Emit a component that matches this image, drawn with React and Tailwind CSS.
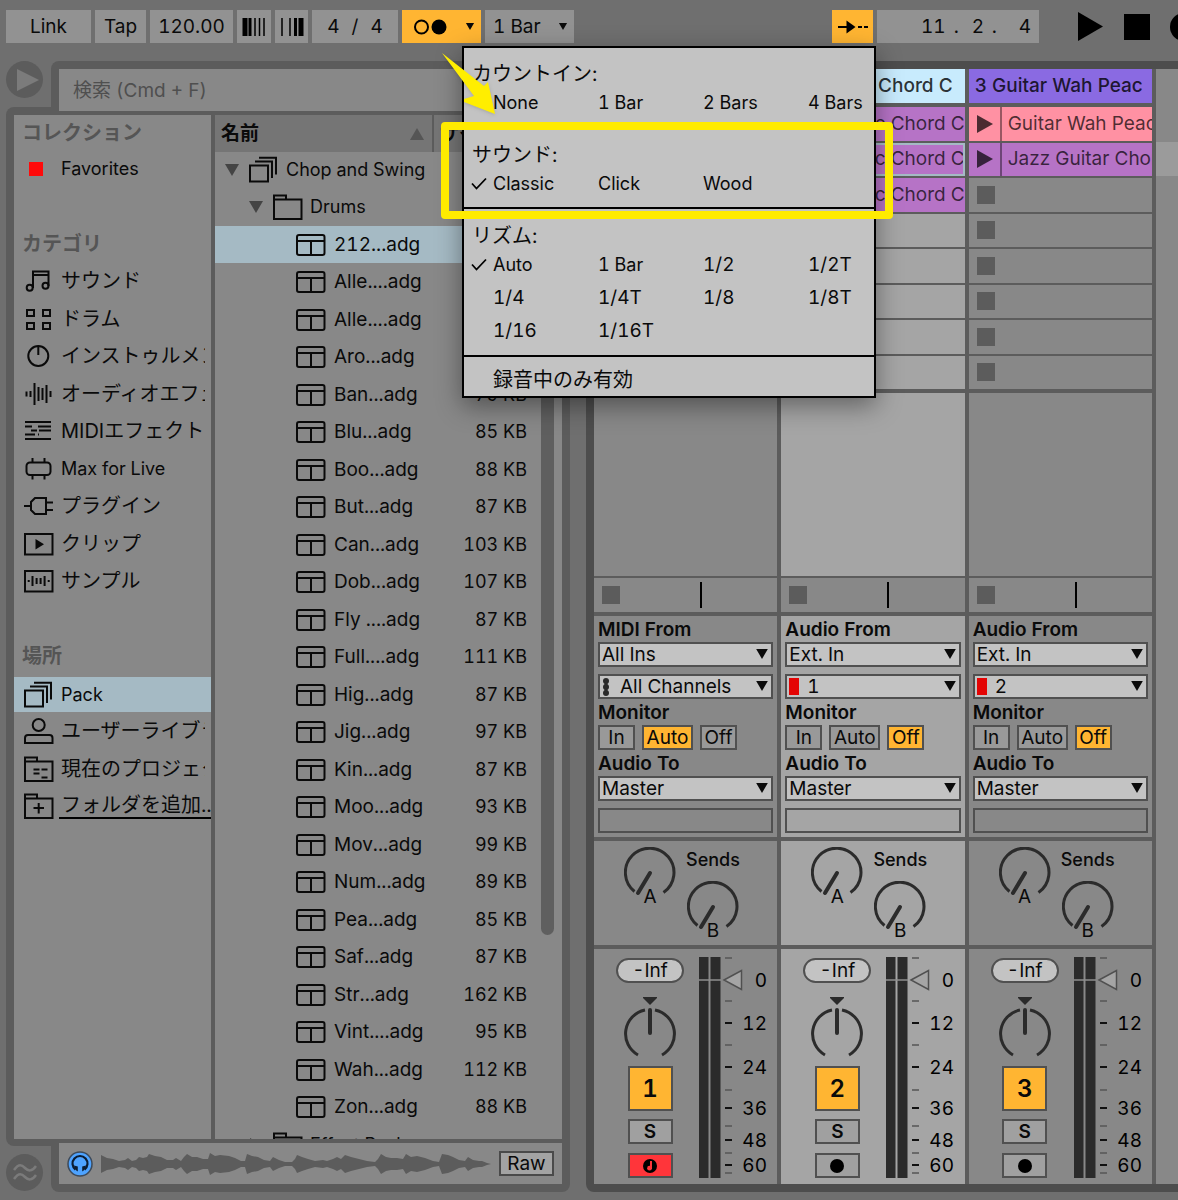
import React from "react";

/* ---------- icons ---------- */

const Icon = ({ children, className = "" }) => (
  <svg
    viewBox="0 0 30 28"
    className={"h-7 w-[30px] shrink-0 overflow-visible " + className}
    fill="none"
    stroke="#0a0a0a"
    strokeWidth="2"
    aria-hidden="true"
  >
    {children}
  </svg>
);

const Bars = ({ data }) => (
  <path d={data.map(([x, h]) => `M${x} ${14 - h}V${14 + h}`).join("")} />
);

const icons = {
  sounds: (
    <Icon>
      <path d="M9 21V4.500H24.500V19M9 8H24.500" />
      <circle cx="5.700" cy="20.700" r="3" />
      <circle cx="21.500" cy="18.700" r="3" />
    </Icon>
  ),
  drums: (
    <Icon>
      <path d="M3 5h7v6H3zM19 5h7v6h-7zM3 18h7v6H3zM19 18h7v6h-7z" />
    </Icon>
  ),
  instruments: (
    <Icon>
      <circle cx="14.300" cy="14" r="10" />
      <path d="M14.300 4V13" />
    </Icon>
  ),
  audioFx: (
    <Icon>
      <Bars data={[[2.500, 2.500], [6.500, 3], [10.500, 11], [14.500, 7], [18.500, 6], [22.500, 9], [26.500, 3]]} />
    </Icon>
  ),
  midiFx: (
    <Icon>
      <path d="M1 5H27M1 9.500H8M14 9.500H27M7 13.500H13M15 13.500H27M1 17.500H11M14 17.500H15M1 22H27" />
    </Icon>
  ),
  max: (
    <Icon>
      <rect x="2.500" y="7.500" width="24" height="12.500" rx="3.500" />
      <path d="M8.500 3V7.500M20.500 3V7.500M8.500 20V24.500M20.500 20V24.500" />
    </Icon>
  ),
  plugin: (
    <Icon>
      <path d="M0 14H7M22 6V22H11L7 18V10L11 6ZM22 10.500H29M22 18H29" />
    </Icon>
  ),
  clip: (
    <Icon>
      <rect x="1" y="4" width="27.500" height="20.500" />
      <path d="M11.500 9V19.500L20 14.200Z" fill="#0a0a0a" stroke="none" />
    </Icon>
  ),
  sample: (
    <Icon>
      <rect x="1" y="4" width="27.500" height="20.500" />
      <Bars data={[[4.700, 1], [8.500, 5], [12.600, 3], [16.600, 3], [20.600, 5], [24.700, 1]]} />
    </Icon>
  ),
  pack: (
    <Icon>
      <path d="M1 9.500H19V25.500H1ZM6 5.500H23V22M10 1.700H27V18.500" />
    </Icon>
  ),
  user: (
    <Icon>
      <circle cx="14.700" cy="8" r="6" />
      <path d="M1 26V21Q1 18 4 18H25.500Q28.500 18 28.500 21V26Z" />
    </Icon>
  ),
  project: (
    <Icon>
      <path d="M1 26V2.500H13V6.500H28.500V26ZM1 6.500H13M9.500 14.500H15.500M17.500 14.500H23.500M9.500 18.500H15.500M17.500 22.500H23.500" />
    </Icon>
  ),
  addFolder: (
    <Icon>
      <path d="M1 26V2.500H13V6.500H28.500V26ZM1 6.500H13M9.500 16H20M14.700 11V21.500" />
    </Icon>
  ),
  folder: (
    <Icon>
      <path d="M1 26V2.500H13V6.500H28.500V26ZM1 6.500H13" />
    </Icon>
  ),
  rack: (
    <Icon>
      <rect x="1" y="4" width="27.500" height="20" rx="2" />
      <path d="M1 10H28.500M15 10V24" />
    </Icon>
  ),
};

const Triangle = ({ className }) => (
  <svg viewBox="0 0 14 12" className={className} aria-hidden="true">
    <path d="M0 0H14L7 12Z" fill="currentColor" />
  </svg>
);

/* ---------- transport ---------- */

const tool = "flex h-[33px] shrink-0 items-center justify-center bg-[#929292]";

function Transport() {
  return (
    <header className="flex h-[61px] shrink-0 items-start gap-1 pl-1.5 pt-2.5">
      <button className={tool + " w-[85px]"}>Link</button>
      <button className={tool + " w-[51px]"}>Tap</button>
      <button className={tool + " w-[83px]"}>120.00</button>
      <button className={tool + " w-[34px]"} aria-label="Nudge down">
        <svg viewBox="0 0 24 18" className="h-[18px] w-6" stroke="#000">
          <path d="M3 0V18" strokeWidth="5" />
          <path d="M8 0V18" strokeWidth="3" />
          <path d="M13 0V18M17.500 0V18M22 0V18" strokeWidth="1.500" />
        </svg>
      </button>
      <button className={tool + " w-[33px]"} aria-label="Nudge up">
        <svg viewBox="0 0 24 18" className="h-[18px] w-6" stroke="#000">
          <path d="M21 0V18" strokeWidth="5" />
          <path d="M15.500 0V18" strokeWidth="3" />
          <path d="M2 0V18M10 0V18" strokeWidth="1.500" />
        </svg>
      </button>
      <button className={tool + " w-[86px] gap-3"}>
        <span>4</span>
        <span>/</span>
        <span>4</span>
      </button>
      <button className="flex h-[33px] w-[79px] shrink-0 items-center bg-[#ffb532] pl-3" aria-label="Metronome">
        <svg viewBox="0 0 34 16" className="h-4 w-[34px]">
          <circle cx="7.500" cy="8" r="6.500" fill="none" stroke="#000" strokeWidth="2" />
          <circle cx="25" cy="8" r="7.500" />
        </svg>
        <Triangle className="ml-auto mr-1.5 h-[7px] w-2.5" />
      </button>
      <button className="flex h-[33px] w-[89px] shrink-0 items-center bg-[#929292] pl-2">
        1 Bar
        <Triangle className="ml-auto mr-1.5 h-[7px] w-2.5" />
      </button>

      <div className="ml-auto flex items-center">
        <button className="flex h-[33px] w-[41px] items-center justify-center bg-[#ffb532]" aria-label="Follow">
          <svg viewBox="0 0 30 16" className="h-4 w-[30px]" stroke="#000" strokeWidth="2">
            <path d="M0 8H9M20 8H24M26 8H30" />
            <path d="M8.500 1.500L17.500 8L8.500 14.500Z" fill="#000" stroke="none" />
          </svg>
        </button>
        <div className="ml-1 flex h-[33px] w-[162px] items-center justify-end bg-[#929292] pr-2">
          <span>11</span>
          <span className="w-[26px] pl-2">.</span>
          <span className="w-3 text-right">2</span>
          <span className="w-[35px] pl-2">.</span>
          <span>4</span>
        </div>
        <button className="ml-[39px]" aria-label="Play">
          <svg viewBox="0 0 25 29" className="h-[29px] w-[25px]">
            <path d="M0 0L25 14.500L0 29Z" />
          </svg>
        </button>
        <button className="ml-[21px] size-[26px] bg-black" aria-label="Stop" />
        <button className="ml-5 w-2 overflow-hidden" aria-label="Record">
          <span className="block size-7 rounded-full bg-black" />
        </button>
      </div>
    </header>
  );
}

/* ---------- browser ---------- */

const sidebar = [
  { head: "コレクション" },
  { label: "Favorites", swatch: true, latin: true },
  {},
  { head: "カテゴリ" },
  { label: "サウンド", icon: icons.sounds },
  { label: "ドラム", icon: icons.drums },
  { label: "インストゥルメント", icon: icons.instruments },
  { label: "オーディオエフェクト", icon: icons.audioFx },
  { label: "MIDIエフェクト", icon: icons.midiFx },
  { label: "Max for Live", icon: icons.max, latin: true },
  { label: "プラグイン", icon: icons.plugin },
  { label: "クリップ", icon: icons.clip },
  { label: "サンプル", icon: icons.sample },
  {},
  { head: "場所" },
  { label: "Pack", icon: icons.pack, selected: true, latin: true },
  { label: "ユーザーライブラリ", icon: icons.user },
  { label: "現在のプロジェクト", icon: icons.project },
  { label: "フォルダを追加...", icon: icons.addFolder, link: true },
];

function SidebarRow({ row }) {
  if (row.head)
    return <h2 className="flex h-full items-center pl-2 text-xl font-bold leading-6 text-[#555]">{row.head}</h2>;
  if (!row.label) return null;
  return (
    <button
      className={
        "flex h-full w-full items-center gap-[7px] overflow-hidden pl-2.5 text-left " +
        (row.latin ? "text-lg leading-6 " : "text-xl leading-6 ") +
        (row.selected ? "border-t-2 border-[#888] bg-[#a5bac4]" : "")
      }
    >
      {row.swatch ? (
        <span className="flex w-[30px] shrink-0 pl-[5px]">
          <span className="size-3.5 bg-[#ff0a0a]" />
        </span>
      ) : (
        row.icon
      )}
      {row.link ? (
        <span className="-ml-0.5 flex-1 overflow-hidden whitespace-nowrap border-b-2 border-black pl-0.5">
          {row.label}
        </span>
      ) : (
        <span className="mr-1.5 flex-1 overflow-hidden whitespace-nowrap">{row.label}</span>
      )}
    </button>
  );
}

const files = [
  ["212...adg", ""],
  ["Alle....adg", ""],
  ["Alle....adg", ""],
  ["Aro...adg", ""],
  ["Ban...adg", "79 KB"],
  ["Blu...adg", "85 KB"],
  ["Boo...adg", "88 KB"],
  ["But...adg", "87 KB"],
  ["Can...adg", "103 KB"],
  ["Dob...adg", "107 KB"],
  ["Fly ....adg", "87 KB"],
  ["Full....adg", "111 KB"],
  ["Hig...adg", "87 KB"],
  ["Jig...adg", "97 KB"],
  ["Kin...adg", "87 KB"],
  ["Moo...adg", "93 KB"],
  ["Mov...adg", "99 KB"],
  ["Num...adg", "89 KB"],
  ["Pea...adg", "85 KB"],
  ["Saf...adg", "87 KB"],
  ["Str...adg", "162 KB"],
  ["Vint....adg", "95 KB"],
  ["Wah...adg", "112 KB"],
  ["Zon...adg", "88 KB"],
];

function FileTable() {
  return (
    <table className="w-full table-fixed border-collapse">
      <thead>
        <tr className="h-[37px] bg-[#757575] text-left">
          <th className="w-[218px] border-r-2 border-[#5c5c5c] p-0">
            <div className="flex items-center justify-between pl-1.5 pr-2">
              名前
              <Triangle className="h-3 w-3.5 rotate-180 text-[#555]" />
            </div>
          </th>
          <th className="p-0 pl-1.5">サイズ</th>
        </tr>
      </thead>
      <tbody>
        <tr className="h-9">
          <td className="p-0">
            <div className="flex items-center whitespace-nowrap pl-2.5 text-lg leading-6">
              <Triangle className="mr-2.5 h-3 w-3.5 text-[#444]" />
              {icons.pack}
              <span className="pl-[7px]">Chop and Swing</span>
            </div>
          </td>
          <td />
        </tr>
        <tr className="h-[38px]">
          <td className="p-0">
            <div className="flex items-center pl-[34px] text-lg leading-6">
              <Triangle className="mr-2.5 h-3 w-3.5 text-[#444]" />
              {icons.folder}
              <span className="pl-[7px]">Drums</span>
            </div>
          </td>
          <td />
        </tr>
        {files.map(([name, size], i) => (
          <tr key={i} className={(i === 0 ? "bg-[#a5bac4] " : "") + "odd:h-[37px] even:h-[38px]"}>
            <td className="p-0">
              <div className="flex items-center whitespace-nowrap pl-[81px]">
                {icons.rack}
                <span className="pl-2">{name}</span>
              </div>
            </td>
            <td className="p-0 pr-[35px] text-right text-lg leading-6">{size}</td>
          </tr>
        ))}
        <tr className="h-[37px]">
          <td className="p-0">
            <div className="flex items-center whitespace-nowrap pl-[34px] text-lg leading-6">
              <Triangle className="mr-2.5 h-3 w-3.5 -rotate-90 text-[#444]" />
              {icons.folder}
              <span className="pl-[7px]">Effect Racks</span>
            </div>
          </td>
          <td />
        </tr>
      </tbody>
    </table>
  );
}

const envelope = [
  [0, 9], [6, 6], [12, 5], [18, 3], [24, 4], [27, 6], [31, 3], [35, 4], [38, 7], [42, 6], [46, 7], [48, 10],
  [54, 8], [60, 7], [66, 4], [72, 4], [75, 6], [80, 3], [83, 7], [86, 10], [91, 7], [96, 7], [102, 5], [107, 5],
  [109, 11], [114, 8], [119, 9], [128, 8], [134, 6], [140, 3], [144, 3], [146, 10], [151, 8], [157, 7], [163, 4],
  [169, 3], [172, 7], [178, 4], [184, 2], [191, 2], [194, 5], [196, 9], [201, 7], [207, 5], [214, 3], [222, 4],
  [226, 3], [232, 5], [236, 7], [240, 5], [244, 9], [250, 7], [258, 5], [266, 3], [274, 2], [277, 5], [280, 10],
  [285, 7], [290, 6], [296, 6], [302, 5], [305, 10], [310, 7], [316, 8], [324, 6], [332, 3], [338, 2], [341, 10],
  [347, 9], [352, 7], [358, 4], [364, 3], [367, 7], [372, 4], [378, 3], [381, 3], [386, 1], [390, 0],
];

const wavePath =
  "M0 12" +
  envelope.map(([x, a]) => `L${x} ${12 - a}`).join("") +
  envelope.slice().reverse().map(([x, a]) => `L${x} ${12 + a}`).join("") +
  "Z";

function Browser() {
  return (
    <section className="flex w-[564px] shrink-0 flex-col" aria-label="Browser">
      <div className="flex h-[46px] shrink-0 gap-2">
        <button className="flex size-[37px] items-center justify-center rounded-full bg-[#5c5c5c]" aria-label="Show browser">
          <svg viewBox="0 0 22 22" className="ml-1.5 size-[22px]">
            <path d="M0 0L22 11L0 22Z" fill="#7b7b7b" />
          </svg>
        </button>
        <div className="flex-1 rounded-t-lg bg-[#5c5c5c] px-2 pt-2">
          <input
            className="relative z-10 block h-[42px] w-full bg-[#888] px-3.5 placeholder:text-[#4f4f4f]"
            aria-label="検索"
            placeholder="検索 (Cmd + F)"
          />
        </div>
      </div>

      <div className="flex min-h-0 flex-1 gap-1 rounded-l-lg bg-[#5c5c5c] px-2 pb-[7px] pt-2">
        <ul className="w-[197px] overflow-hidden bg-[#888]">
          {sidebar.map((row, i) => (
            <li key={i} className="odd:h-[38px] even:h-[37px] first:h-[35px]!">
              <SidebarRow row={row} />
            </li>
          ))}
        </ul>
        <div className="relative flex-1 overflow-hidden bg-[#888]">
          <FileTable />
          <div className="absolute right-2 top-10 h-[780px] w-[13px] rounded-full bg-[#5f5f5f]" />
        </div>
      </div>

      <div className="flex h-[46px] shrink-0 gap-2">
        <button className="mt-2 flex size-[37px] items-center justify-center rounded-full bg-[#5c5c5c]" aria-label="Groove pool">
          <svg viewBox="0 0 24 18" className="h-[18px] w-6" fill="none" stroke="#7b7b7b" strokeWidth="2.500">
            <path d="M1 6C6-1 9 1 12 4S19 8 23 2M1 15C6 8 9 10 12 13S19 17 23 11" />
          </svg>
        </button>
        <div className="flex-1 rounded-b-lg bg-[#5c5c5c] px-2 pb-2">
          <div className="relative -mt-[3px] flex h-[41px] items-center bg-[#888] pl-2 pr-2">
            <button aria-label="Preview">
              <svg viewBox="0 0 26 26" className="size-[26px]">
                <circle cx="13" cy="13" r="12" fill="#4ea3ff" stroke="#3d4a5a" strokeWidth="1.500" />
                <path d="M8.500 18.500A7.500 7.500 0 1 1 17.500 18.500" fill="none" stroke="#0c1d33" strokeWidth="2.200" />
                <path d="M7 14.500L10.800 15.500V20.500Q7.500 19 7 14.500ZM19 14.500L15.200 15.500V20.500Q18.500 19 19 14.500Z" fill="#0c1d33" />
              </svg>
            </button>
            <svg viewBox="0 0 390 24" className="ml-2 h-6 w-[390px] text-[#5c5c5c]" aria-hidden="true">
              <path d={wavePath} fill="currentColor" />
            </svg>
            <button className="ml-auto flex h-[25px] w-[55px] items-center justify-center border-2 border-[#4a4a4a] bg-[#a3a3a3]">
              Raw
            </button>
          </div>
        </div>
      </div>
    </section>
  );
}

/* ---------- mixer ---------- */

const tracks = [
  {
    n: 1, title: "", head: "bg-[#c8ebfd]", bg: "bg-[#888]", from: "MIDI From", input: "All Ins",
    channel: "All Channels", midi: true, monitor: "Auto", clips: [], armed: true,
  },
  {
    n: 2, title: "Chord C", head: "bg-[#c8ebfd]", bg: "bg-[#a5a5a5]", from: "Audio From", input: "Ext. In",
    channel: "1", monitor: "Off", right: true,
    clips: [
      { name: "c Chord C", bg: "bg-[#b673c6]" },
      { name: "c Chord C", bg: "bg-[#b673c6]", ring: true },
      { name: "c Chord C", bg: "bg-[#b673c6]" },
    ],
  },
  {
    n: 3, title: "3 Guitar Wah Peac", head: "bg-[#8a6ae2]", bg: "bg-[#888]", from: "Audio From", input: "Ext. In",
    channel: "2", monitor: "Off",
    clips: [
      { name: "Guitar Wah Peace", bg: "bg-[#ff91a3]" },
      { name: "Jazz Guitar Chords", bg: "bg-[#b673c6]" },
    ],
  },
];

function Clip({ clip, right }) {
  return (
    <button
      className={
        "flex min-w-0 items-stretch overflow-hidden text-left text-black/70 " +
        clip.bg +
        (clip.ring ? " outline-2 -outline-offset-2 outline-[#a5bac4]" : "")
      }
    >
      <span className="flex w-[33px] shrink-0 items-center border-r-2 border-black/40 pl-2">
        <svg viewBox="0 0 16 18" className="h-[18px] w-4">
          <path d="M0 0L16 9L0 18Z" fill="currentColor" />
        </svg>
      </span>
      <span
        className={
          "flex flex-1 items-center overflow-hidden whitespace-nowrap " + (right ? "justify-end" : "pl-1.5")
        }
      >
        {clip.name}
      </span>
    </button>
  );
}

function Select({ label, value, chip }) {
  return (
    <div className="relative h-[25px]">
      <select
        aria-label={label}
        className={
          "block h-[25px] w-full appearance-none border-2 border-[#505050] bg-[#c3c3c3] leading-5 " +
          (chip ? "pl-5" : "pl-0.5")
        }
      >
        <option>{value}</option>
      </select>
      {chip === "audio" && <span className="absolute left-1 top-1 h-[17px] w-2.5 bg-[#e40404]" />}
      {chip === "midi" && (
        <svg viewBox="0 0 8 18" className="absolute left-1 top-1 h-[18px] w-2" fill="#2b2b2b">
          <circle cx="4" cy="3" r="3" />
          <circle cx="4" cy="9" r="3" />
          <circle cx="4" cy="15" r="3" />
          <path d="M2.500 3h3v12h-3z" />
        </svg>
      )}
      <Triangle className="pointer-events-none absolute right-1 top-[7px] h-2.5 w-3.5" />
    </div>
  );
}

const small = "flex h-[25px] items-center justify-center border-2 border-[#505050]";
const ioHeading = "h-[26px] font-semibold leading-[27px]";

function IO({ t }) {
  const widths = { In: "w-[37px]", Auto: "w-[51px]", Off: "w-[37px]" };
  return (
    <div className={"px-1 pb-1 " + t.bg}>
      <h3 className={ioHeading}>{t.from}</h3>
      <Select label={`${t.from} ${t.n}`} value={t.input} />
      <div className="h-[7px]" />
      <Select label={`Channel ${t.n}`} value={t.channel} chip={t.midi ? "midi" : "audio"} />
      <h3 className={ioHeading}>Monitor</h3>
      <div className="flex gap-[7px]">
        {["In", "Auto", "Off"].map((m) => (
          <button key={m} className={`${small} ${widths[m]} ${m === t.monitor ? "bg-[#ffb532]" : "bg-[#999]"}`}>
            {m}
          </button>
        ))}
      </div>
      <h3 className={ioHeading}>Audio To</h3>
      <Select label={`Audio To ${t.n}`} value="Master" />
      <div className="mt-[7px] h-[25px] border-2 border-[#505050]" />
    </div>
  );
}

const Knob = ({ letter, n }) => (
  <label className="relative block size-[52px]">
    <svg viewBox="0 0 52 52" className="size-[52px]" fill="none" stroke="#2b2b2b" strokeWidth="3">
      <path d="M10.500 44.500A24.300 24.300 0 1 1 39.500 45.500" />
      <path d="M26 26L14 46" strokeWidth="4" strokeLinecap="round" />
    </svg>
    <span className="absolute inset-x-0 top-10 text-center leading-5">{letter}</span>
    <input
      type="range"
      aria-label={`Send ${letter} ${n}`}
      defaultValue="0"
      className="absolute inset-0 h-full w-full opacity-0"
    />
  </label>
);

const major = [[23, "0"], [66, "12"], [110, "24"], [151, "36"], [183, "48"], [208, "60"]];
const minor = [1, 44, 88, 133, 169, 196, 216];

function Meter({ n }) {
  return (
    <label className="relative block">
      <svg viewBox="0 0 79 221" className="h-[221px] w-[79px] overflow-visible">
        <path d="M0 0H9.500V221H0ZM11.500 0H21.500V221H11.500Z" fill="#2b2b2b" />
        <path d="M0 23H22" stroke="#8f8f8f" strokeWidth="1.500" />
        <path d={minor.map((y) => `M26 ${y}H33`).join("")} stroke="#555" strokeWidth="1.500" />
        <path d={major.slice(1).map(([y]) => `M26 ${y}H33`).join("")} stroke="#111" strokeWidth="2" />
        <path d="M25 23L42.500 13.500V32.500Z" fill="#a5a5a5" stroke="#505050" strokeWidth="1.500" />
        {major.map(([y, text]) => (
          <text key={text} x="68" y={y + 7} textAnchor="end">
            {text}
          </text>
        ))}
      </svg>
      <input
        type="range"
        aria-label={`Volume ${n}`}
        defaultValue="85"
        className="absolute inset-0 h-full w-full opacity-0"
      />
    </label>
  );
}

function Strip({ t }) {
  return (
    <div className={"flex gap-[15px] overflow-hidden pb-1.5 pl-[22px] pt-2 " + t.bg}>
      <div className="flex w-[68px] shrink-0 flex-col items-center">
        <div className="mt-px flex h-[25px] w-[68px] items-center justify-center rounded-full border-2 border-[#505050] bg-[#c3c3c3]">
          -Inf
        </div>
        <label className="relative mt-3.5 block">
          <svg viewBox="0 0 52 63" className="h-[63px] w-[52px]" fill="none" stroke="#2b2b2b" strokeWidth="3">
            <path d="M19 0H33V1L26 8L19 1Z" fill="#2b2b2b" stroke="none" />
            <path d="M21 13A24.300 24.300 0 0 0 14 58M31 13A24.300 24.300 0 0 1 38 58" />
            <path d="M26 13V36" strokeWidth="4" strokeLinecap="round" />
          </svg>
          <input type="range" aria-label={`Pan ${t.n}`} className="absolute inset-0 h-full w-full opacity-0" />
        </label>
        <button className="mt-1.5 flex size-[45px] items-center justify-center border-2 border-[#505050] bg-[#ffb532] text-2xl font-semibold">
          {t.n}
        </button>
        <button className={small + " mt-2 w-[45px] bg-[#a0a0a0] font-semibold"}>S</button>
        <button
          className={small + " mt-[9px] w-[45px] " + (t.armed ? "bg-[#ff353a]" : "bg-[#a0a0a0]")}
          aria-label={`Arm ${t.n}`}
        >
          <svg viewBox="0 0 14 14" className="size-3.5">
            <circle cx="7" cy="7" r="7" />
            {t.armed && (
              <g fill="#ff353a">
                <path d="M7 2H9V10H7Z" />
                <circle cx="6.500" cy="9.200" r="2.400" />
              </g>
            )}
          </svg>
        </button>
      </div>
      <Meter n={t.n} />
    </div>
  );
}

function Track({ t }) {
  const slots = Array.from({ length: 8 }, (_, i) => t.clips[i]);
  return (
    <div className="flex min-w-0 flex-col">
      <div
        className={
          "flex h-[34px] items-center overflow-hidden whitespace-nowrap font-medium text-black/80 " +
          t.head +
          (t.right ? " justify-end pr-3" : " pl-1.5")
        }
      >
        {t.title}
      </div>
      <div className="mt-1 grid h-[282px] grid-cols-1 grid-rows-8 gap-0.5">
        {slots.map((c, i) =>
          c ? (
            <Clip key={i} clip={c} right={t.right} />
          ) : (
            <div key={i} className={"flex items-center pl-2 " + t.bg}>
              <span className="size-[18px] bg-[#5c5c5c]" />
            </div>
          )
        )}
      </div>
      <div className={"mt-1 flex-1 " + t.bg} />
      <div className="mt-0.5 flex h-[34px] items-center bg-[#888] pl-2">
        <span className="size-[18px] bg-[#5c5c5c]" />
        <span className="ml-20 h-[26px] w-0.5 bg-black" />
      </div>
      <div className="h-1" />
      <IO t={t} />
      <div className={"mt-1 flex h-[104px] gap-[11px] pl-[30px] pt-1.5 " + t.bg}>
        <Knob letter="A" n={t.n} />
        <div className="flex w-[52px] flex-col items-center">
          <span className="h-[34px] text-lg font-medium leading-[26px]">Sends</span>
          <Knob letter="B" n={t.n} />
        </div>
      </div>
      <div className="h-1" />
      <Strip t={t} />
    </div>
  );
}

function Mixer() {
  return (
    <section className="min-w-0 flex-1 rounded-l-lg bg-[#4d4d4d] py-2 pl-2" aria-label="Session">
      <div className="grid h-full grid-cols-[1fr_1fr_1fr_22px] gap-1 bg-[#5c5c5c]">
        {tracks.map((t) => (
          <Track key={t.n} t={t} />
        ))}
        <div className="bg-[#888] pt-[73px]">
          <div className="h-[34px] bg-[#9b9b9b]" />
        </div>
      </div>
    </section>
  );
}

/* ---------- metronome menu ---------- */

function MenuSection({ title, items, checked, className }) {
  return (
    <div className={"border-b-2 border-black " + className}>
      <h4 className="h-[30px] pl-2 text-xl leading-[30px]">{title}</h4>
      <div className="grid grid-cols-[repeat(3,105px)_1fr] gap-y-[5px] pl-[29px]">
        {items.map((item) => (
          <button
            key={item}
            role="menuitemradio"
            aria-checked={item === checked}
            className={
              "relative h-7 whitespace-nowrap text-left " +
              (item.includes("/") ? "text-[19px] leading-7" : "text-lg leading-7")
            }
          >
            {item === checked && (
              <svg viewBox="0 0 16 13" className="absolute -left-[22px] top-[7px] h-[13px] w-4" fill="none" stroke="#000" strokeWidth="1.800">
                <path d="M1 6.500L5.500 11.500L15 1.500" />
              </svg>
            )}
            {item}
          </button>
        ))}
      </div>
    </div>
  );
}

function MetronomeMenu() {
  return (
    <div
      role="menu"
      className="absolute left-[462px] top-[46px] z-20 w-[414px] border-2 border-black bg-[#c3c3c3] shadow-[0_8px_24px_rgba(0,0,0,0.4)]"
    >
      <MenuSection className="pb-[9px] pt-[11px]" title="カウントイン:" items={["None", "1 Bar", "2 Bars", "4 Bars"]} />
      <MenuSection className="pb-[9px] pt-3" title="サウンド:" items={["Classic", "Click", "Wood"]} checked="Classic" />
      <MenuSection
        className="pb-2.5 pt-3"
        title="リズム:"
        items={["Auto", "1 Bar", "1/2", "1/2T", "1/4", "1/4T", "1/8", "1/8T", "1/16", "1/16T"]}
        checked="Auto"
      />
      <button role="menuitemcheckbox" aria-checked="false" className="block h-[39px] w-full pl-[29px] pt-1.5 text-left text-xl leading-6">
        録音中のみ有効
      </button>
    </div>
  );
}

function Annotation() {
  return (
    <>
      <div className="pointer-events-none absolute left-[441px] top-[122px] z-30 h-[97px] w-[452px] rounded border-8 border-[#ffeb00]" />
      <svg viewBox="0 0 54 62" className="pointer-events-none absolute left-[442px] top-[53px] z-30 h-[62px] w-[54px] drop-shadow">
        <path d="M0 0L42 33L46 29L53 61L22 49V46L32 43Z" fill="#ffee00" />
      </svg>
    </>
  );
}

export default function App() {
  return (
    <div className="relative flex h-screen flex-col overflow-hidden bg-[#6f6f6f] pb-2 font-['Inter','Noto_Sans_CJK_JP',sans-serif] text-[19px] leading-6 tabular-nums text-[#0a0a0a]">
      <Transport />
      <main className="flex min-h-0 flex-1 gap-4 pl-1.5">
        <Browser />
        <Mixer />
      </main>
      <MetronomeMenu />
      <Annotation />
    </div>
  );
}
